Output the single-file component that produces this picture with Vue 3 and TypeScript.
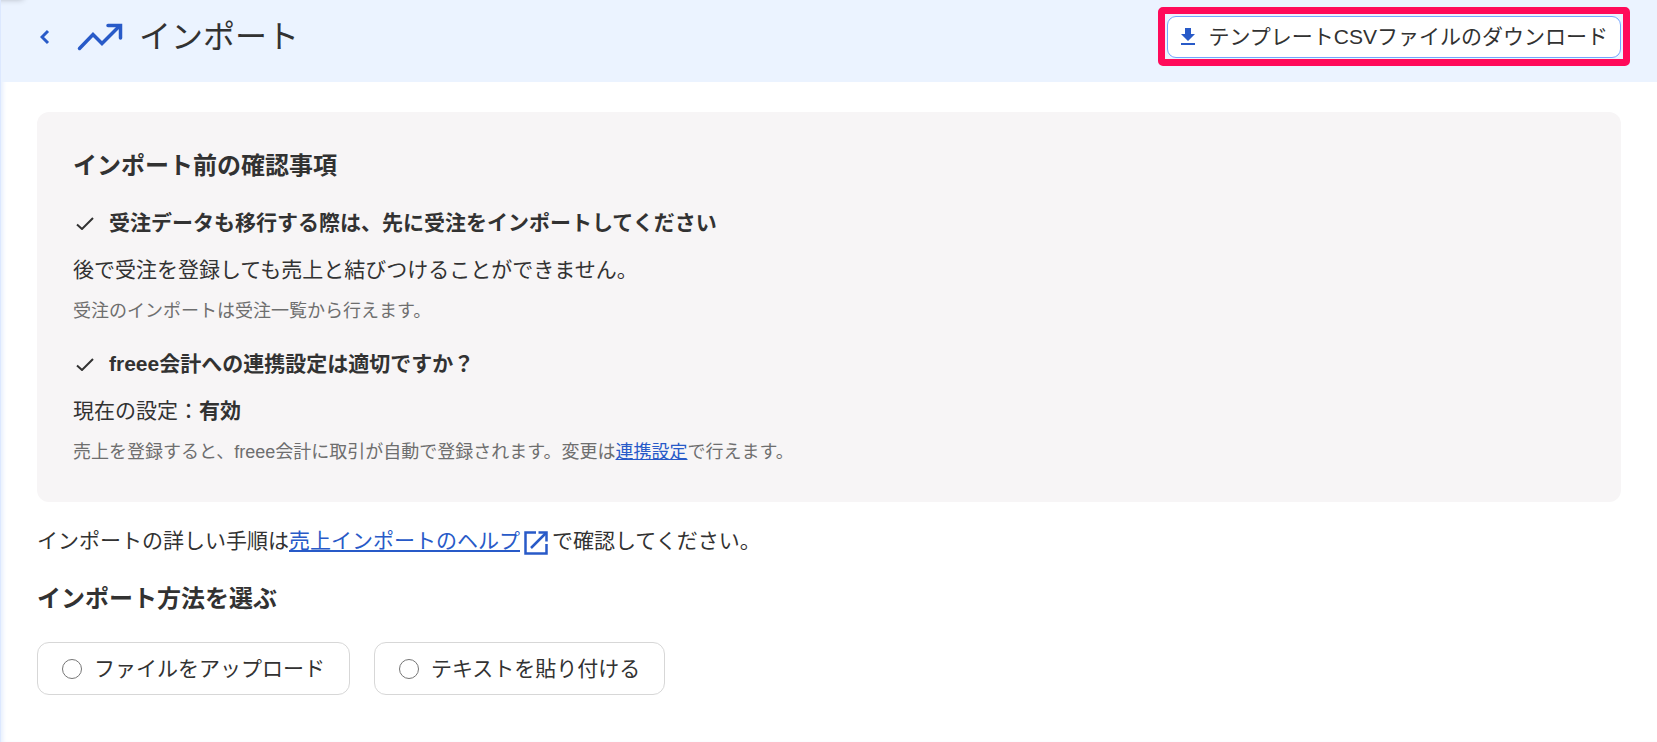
<script setup lang="ts">
import { ref } from 'vue'

interface ImportMethod {
  value: string
  label: string
}

const methods: ImportMethod[] = [
  { value: 'upload', label: 'ファイルをアップロード' },
  { value: 'paste', label: 'テキストを貼り付ける' },
]
const selected = ref<string>('')
</script>

<template>
  <div class="page">
    <header class="header">
      <a class="back" href="#" aria-label="戻る">
        <svg width="10" height="16" viewBox="0 0 10 16" aria-hidden="true">
          <path d="M8 2 2 8l6 6" />
        </svg>
      </a>
      <svg class="trend" width="46" height="28" viewBox="0 0 46 28" aria-hidden="true">
        <path d="M2.500 25.500 16 11.500l9 9L42.500 3" />
        <path d="M31 2.500h12.500v12.500" />
      </svg>
      <h1 class="title">インポート</h1>
      <div class="highlight">
        <button class="download" type="button">
          <svg width="14" height="18" viewBox="0 0 14 18" aria-hidden="true">
            <path d="M4 0h6v6h4l-7 7-7-7h4zM0 15h14v2H0z" />
          </svg>
          テンプレートCSVファイルのダウンロード
        </button>
      </div>
    </header>

    <main class="main">
      <section class="card">
        <h2 class="heading">インポート前の確認事項</h2>
        <div class="item">
          <h3 class="check">
            <svg width="18" height="14" viewBox="0 0 18 14" aria-hidden="true">
              <path d="M1 8.500 6 13 17 2" />
            </svg>
            受注データも移行する際は、先に受注をインポートしてください
          </h3>
          <p class="text">後で受注を登録しても売上と結びつけることができません。</p>
          <p class="note">受注のインポートは受注一覧から行えます。</p>
        </div>
        <div class="item">
          <h3 class="check">
            <svg width="18" height="14" viewBox="0 0 18 14" aria-hidden="true">
              <path d="M1 8.500 6 13 17 2" />
            </svg>
            freee会計への連携設定は適切ですか？
          </h3>
          <p class="text">現在の設定：<strong>有効</strong></p>
          <p class="note">売上を登録すると、freee会計に取引が自動で登録されます。変更は<a href="#">連携設定</a>で行えます。</p>
        </div>
      </section>

      <p class="help">インポートの詳しい手順は<a href="#">売上インポートのヘルプ</a><svg class="external" width="24" height="24" viewBox="0 0 24 24" aria-hidden="true"><path d="M12 1.500H1.500v21h21V13" /><path d="M7 17 22 2" /><path d="M14.500 1.500h8v9" /></svg>で確認してください。</p>

      <h2 id="method-heading" class="heading">インポート方法を選ぶ</h2>
      <div class="methods" role="radiogroup" aria-labelledby="method-heading">
        <label v-for="m in methods" :key="m.value" class="method">
          <input v-model="selected" type="radio" name="method" :value="m.value" />
          <span>{{ m.label }}</span>
        </label>
      </div>
    </main>
  </div>
</template>

<style>
body {
  margin: 0;
  background: #fff;
}
</style>

<style scoped>
.page {
  position: relative;
  box-sizing: border-box;
  min-height: 100vh;
  overflow: hidden;
  border-left: 1px solid #dce8ff;
  box-shadow: inset 4px 0 4px -2px #e6effd;
  color: #323232;
  font-family: "Liberation Sans", "Noto Sans CJK JP", sans-serif;
  font-size: 21px;
  line-height: 32px;
}
/* Shadow of the panel just above the top left corner */
.page::before {
  content: "";
  position: absolute;
  top: -11px;
  left: -10px;
  width: 32px;
  height: 10px;
  box-shadow: 0 0 6px rgba(0, 0, 0, 0.3);
}
h1, h2, h3, p {
  margin: 0;
}
svg {
  flex: none;
}
.header {
  display: flex;
  align-items: flex-start;
  padding: 7px 27px 16px 39px;
  background: #ebf3ff;
}
.back {
  display: flex;
  padding-top: 22px;
}
.back path {
  fill: none;
  stroke: #285ac8;
  stroke-width: 3;
}
.trend {
  margin: 16px 16px 0 27px;
}
.trend path {
  fill: none;
  stroke: #285ac8;
  stroke-linecap: round;
  stroke-width: 3.5;
}
.title {
  margin-top: 6px;
  font-size: 32px;
  font-weight: 400;
  line-height: 48px;
}
.highlight {
  margin-left: auto;
  padding: 2px 2px 1px;
  border: 7px solid #ff0a5a;
  border-radius: 5px;
}
.download {
  display: flex;
  align-items: center;
  gap: 13px;
  padding: 4px 12px 4px 13px;
  border: 1px solid #73a5ff;
  border-radius: 9px;
  background: #fff;
  color: inherit;
  font: inherit;
  white-space: nowrap;
}
.download path {
  fill: #285ac8;
}
.main {
  padding: 30px 36px;
}
.card {
  padding: 36px;
  border-radius: 12px;
  background: #f7f5f6;
}
.heading {
  font-size: 24px;
  font-weight: 700;
  line-height: 36px;
}
.item {
  margin-top: 23px;
}
.check {
  display: flex;
  align-items: center;
  gap: 15px;
  padding-left: 3px;
  font-size: 21px;
  font-weight: 700;
}
.check path {
  fill: none;
  stroke: #323232;
  stroke-width: 2;
}
.text {
  margin-top: 15px;
}
.note {
  margin-top: 12px;
  color: #6e6e6e;
  font-size: 18px;
  line-height: 27px;
}
a {
  color: #285ac8;
}
.help {
  margin: 23px 0 24px;
}
.external {
  margin: 0 4px;
  vertical-align: -7px;
}
.external path {
  fill: none;
  stroke: #285ac8;
  stroke-width: 2.5;
}
.methods {
  display: flex;
  flex-wrap: wrap;
  gap: 24px;
  margin-top: 25px;
}
.method {
  display: flex;
  align-items: center;
  gap: 12px;
  padding: 10px 24px 9px;
  border: 1px solid #d7d7d7;
  border-radius: 12px;
}
.method input {
  width: 20px;
  height: 20px;
  margin: 0;
}
</style>
